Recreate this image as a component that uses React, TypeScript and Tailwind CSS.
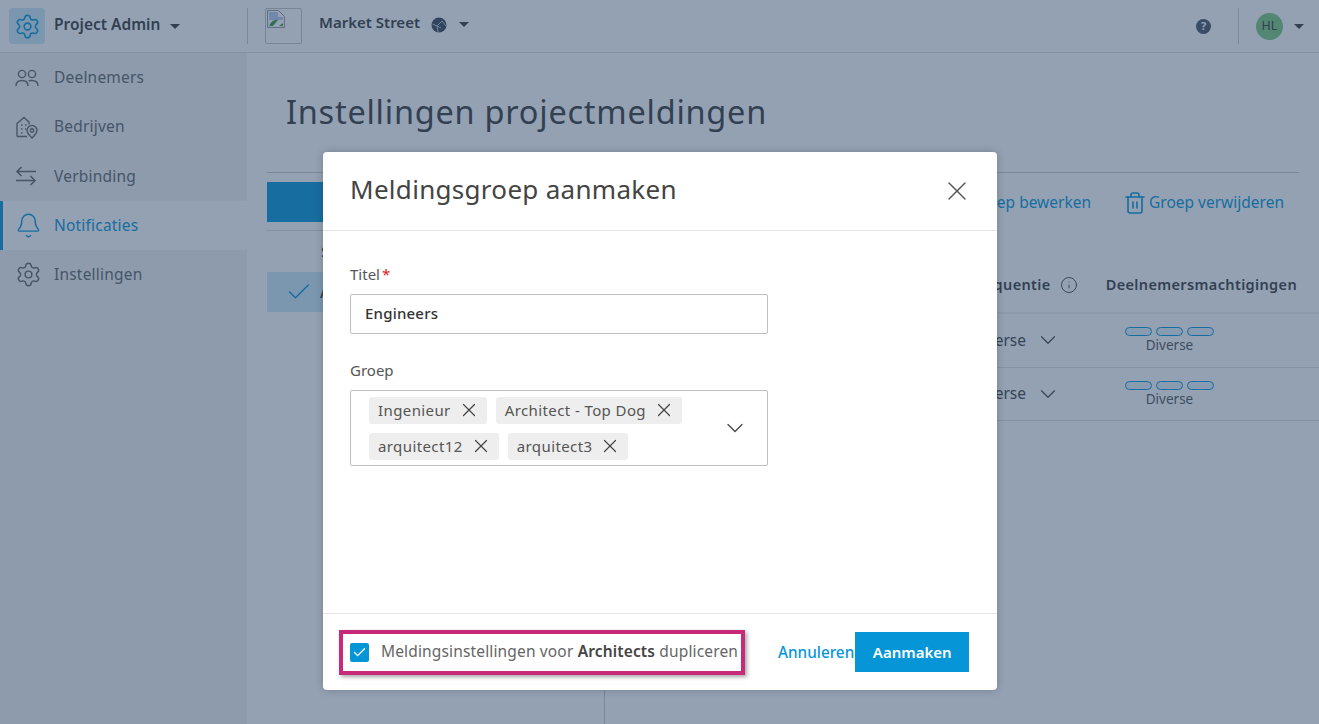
import React from 'react';
import { Settings, Bell, Trash2, Info, X, ChevronDown, Check } from 'lucide-react';

const font = "font-['Noto_Sans','Liberation_Sans',sans-serif]";

function Caret() {
  return <span className="inline-block w-0 h-0 border-x-[5px] border-x-transparent border-t-[5px] border-t-[#3c3c3c]" />;
}

function PeopleIcon() {
  return (
    <svg width="24" height="18" viewBox="0 0 24 18" fill="none" stroke="currentColor" strokeWidth="1.4">
      <circle cx="7" cy="5" r="3.600" />
      <circle cx="17" cy="5" r="3.600" />
      <path d="M1 17c0-3.500 2.500-5.500 6-5.500s6 2 6 5.500" />
      <path d="M13.500 11.800c1-.3 2.300-.4 3.500-.3 3.500 0 6 2 6 5.500" />
    </svg>
  );
}

function CompanyIcon() {
  return (
    <svg width="24" height="26" viewBox="0 0 24 26" fill="none" stroke="currentColor" strokeWidth="1.4">
      <path d="M2 22.500V9.500l7-6 5 4.500v2.500M2 22.500h10" />
      <path d="M6 11h1.500M10 11h1.500M6 15h1.500M6 19h1.500M10 15h1" />
      <path d="M17 24c-3-3-5-5-5-7.500a5 5 0 0 1 10 0c0 2.500-2 4.500-5 7.500z" />
      <circle cx="17" cy="16.500" r="1.700" />
    </svg>
  );
}

function SwapIcon() {
  return (
    <svg width="22" height="20" viewBox="0 0 22 20" fill="none" stroke="currentColor" strokeWidth="1.5">
      <path d="M21 5.500H2M6.500 1 2 5.500 6.500 10" />
      <path d="M1 14.500h19M15.500 10l4.500 4.500-4.500 4.500" />
    </svg>
  );
}

function BrokenImage() {
  return (
    <svg width="18" height="19" viewBox="0 0 18 19">
      <path d="M.5.500h11l6 6v11H.5z" fill="#fff" stroke="#9a9a9a" />
      <path d="M2 2h9v5h5v3H2z" fill="#b9cdf0" />
      <path d="M2 16c2-5 6-7 9-6l-5 6z" fill="#3f9a3f" />
      <path d="M12 16l4-3v3z" fill="#3f9a3f" />
    </svg>
  );
}

function Globe() {
  return (
    <svg width="16" height="16" viewBox="0 0 16 16">
      <circle cx="8" cy="8" r="7.500" fill="#3c4654" />
      <path d="M1.500 7 6 9l5-5M6 9l1 6M11 4l4 5M6 9l4 2" stroke="#b9c3cf" strokeWidth="1" fill="none" />
    </svg>
  );
}

function NavItem({ icon, label, active }: { icon: React.ReactNode; label: string; active?: boolean }) {
  return (
    <div
      className={`h-[49.3px] flex items-center border-l-[3px] pl-[12px] ${
        active ? 'border-[#0696d7] bg-white text-[#0696d7]' : 'border-transparent text-[#666]'
      }`}
    >
      <span className="w-[39px] flex items-center">{icon}</span>
      <span className="text-[15.5px] tracking-[0.2px]">{label}</span>
    </div>
  );
}

function Permission() {
  return (
    <div className="w-[91px] flex flex-col items-center text-[#555]">
      <div className="flex gap-[4px]">
        <span className="w-[27px] h-[9px] rounded-full border-[1.5px] border-[#0696d7] bg-[#e6f5fb]" />
        <span className="w-[27px] h-[9px] rounded-full border-[1.5px] border-[#0696d7] bg-[#e6f5fb]" />
        <span className="w-[27px] h-[9px] rounded-full border-[1.5px] border-[#0696d7] bg-[#e6f5fb]" />
      </div>
      <span className="text-[13.5px] leading-[16px] mt-[1px]">Diverse</span>
    </div>
  );
}

function TableRow() {
  return (
    <div className="h-[53.5px] flex items-center border-b border-[#e2e2e2] pl-[361px]">
      <span className="text-[15.5px] text-[#444] w-[60px] text-right">Diverse</span>
      <ChevronDown size={26} strokeWidth={1.1} className="ml-[9px] text-[#444]" />
      <span className="ml-[63px]"><Permission /></span>
    </div>
  );
}

function Chip({ label }: { label: string }) {
  return (
    <span className="h-[27px] flex items-center gap-[7px] pl-[9px] pr-[7px] rounded-[3px] bg-[#eeeeee] text-[15px] tracking-[0.4px] text-[#555]">
      {label}
      <X size={22} strokeWidth={1.3} className="text-[#444]" />
    </span>
  );
}

export default function App() {
  return (
    <div className={`${font} relative w-[1319px] h-[724px] overflow-hidden bg-white text-[#3c3c3c]`}>
      {/* Header */}
      <header className="h-[53px] flex items-center border-b border-[#dcdcdc] bg-white">
        <div className="w-[247px] flex items-center pl-[9px]">
          <span className="w-[36px] h-[36px] rounded-[4px] bg-[#cdeaf7] flex items-center justify-center text-[#0696d7]">
            <Settings size={27} strokeWidth={1.4} />
          </span>
          <span className="ml-[9px] -mt-[2px] text-[15.5px] font-semibold">Project Admin</span>
          <span className="ml-[10px] flex"><Caret /></span>
        </div>
        <div className="h-[36px] border-l border-[#cfcfcf]" />
        <div className="ml-[17px] w-[37px] h-[36px] border border-[#c4c4c4] rounded-[2px]">
          <span className="block ml-[1px] mt-[1px]"><BrokenImage /></span>
        </div>
        <span className="ml-[17px] text-[15px] font-semibold -mt-[8px]">Market Street</span>
        <span className="ml-[11px] -mt-[3px] flex"><Globe /></span>
        <span className="ml-[12px] -mt-[4px] flex"><Caret /></span>
        <div className="ml-auto flex items-center pr-[15px]">
          <span className="w-[15px] h-[15px] rounded-full bg-[#4a5565] text-white text-[11px] font-bold flex items-center justify-center">?</span>
          <div className="ml-[27px] h-[36px] border-l border-[#cfcfcf]" />
          <span className="ml-[17px] w-[27px] h-[27px] rounded-full bg-[#7fc97f] text-[12.5px] flex items-center justify-center">HL</span>
          <span className="ml-[11px] flex"><Caret /></span>
        </div>
      </header>

      <div className="flex h-[671px]">
        {/* Sidebar */}
        <aside className="w-[247px] bg-[#f3f3f3]">
          <NavItem icon={<PeopleIcon />} label="Deelnemers" />
          <NavItem icon={<CompanyIcon />} label="Bedrijven" />
          <NavItem icon={<SwapIcon />} label="Verbinding" />
          <NavItem active icon={<Bell size={27} strokeWidth={1.3} />} label="Notificaties" />
          <NavItem icon={<Settings size={27} strokeWidth={1.3} />} label="Instellingen" />
        </aside>

        {/* Main */}
        <main className="flex-1 flex flex-col">
          <h1 className="pl-[39px] pt-[37px] h-[119px] text-[32.5px] tracking-[0.75px] leading-[44px] font-normal">
            Instellingen projectmeldingen
          </h1>
          <div className="ml-[20px] mr-[20px] border-t border-[#cccccc]" />
          <div className="flex-1 flex pl-[20px]">
            <div className="w-[338px] border-r border-[#cccccc] pt-[9px]">
              <div className="h-[40px] w-[200px] bg-[#0696d7]" />
              <div className="mt-[8px] border-t border-[#dddddd] w-[318px]" />
              <div className="h-[41px] pl-[54px] flex items-center text-[14px]">Standaard</div>
              <div className="h-[40px] w-[200px] bg-[#cdeaf7] flex items-center pl-[18px] text-[14px]">
                <Check size={28} strokeWidth={1.2} className="text-[#0696d7]" />
                <span className="ml-[7px] font-semibold">Architects</span>
              </div>
            </div>
            <div className="flex-1 flex flex-col">
              <div className="h-[59px] flex items-center justify-end pr-[35px] text-[15.5px] text-[#0696d7]">
                <span>Groep bewerken</span>
                <Trash2 size={24} strokeWidth={1.6} className="ml-[32px] mr-[2px]" />
                <span>Groep verwijderen</span>
              </div>
              <div className="h-[82px] pt-[25px] flex items-center justify-end pr-[22px] text-[14.5px] tracking-[0.36px] font-semibold border-b-2 border-[#eeeeee]">
                <span>Frequentie</span>
                <Info size={18} strokeWidth={1.2} className="ml-[9px]" />
                <span className="ml-[28px]">Deelnemersmachtigingen</span>
              </div>
              <TableRow />
              <TableRow />
            </div>
          </div>
        </main>
      </div>

      {/* Modal backdrop */}
      <div className="absolute inset-0 bg-[rgba(39,67,103,0.5)] flex items-start justify-start">
        <div className="ml-[323px] mt-[152px] w-[674px] h-[538px] flex flex-col rounded-[4px] bg-white shadow-[0_0_8px_rgba(0,0,0,0.2)]">
          <div className="h-[79px] shrink-0 flex items-center justify-between border-b border-[#e4e4e4] pl-[27px] pr-[24px]">
            <h2 className="pb-[3px] text-[26px] tracking-[0.3px] font-normal text-[#444]">Meldingsgroep aanmaken</h2>
            <X size={32} strokeWidth={1} className="text-[#555]" />
          </div>

          <div className="flex-1 pl-[27px] pt-[31px]">
            <label className="block h-[29px] text-[15px] leading-[24px] text-[#555]">
              Titel<span className="ml-[2px] text-[#e02020]">*</span>
            </label>
            <div className="mt-[3px] w-[418px] h-[40px] pb-[2px] flex items-center border border-[#bfbfbf] rounded-[2px] pl-[14px] text-[15px] tracking-[0.2px] font-medium text-[#333]">
              Engineers
            </div>
            <label className="block mt-[24px] h-[32px] text-[15px] leading-[24px] text-[#555]">Groep</label>
            <div className="w-[418px] h-[76px] flex items-center border border-[#bfbfbf] rounded-[2px] pl-[18px] pr-[18px]">
              <div className="flex-1 flex flex-wrap gap-x-[9px] gap-y-[9px]">
                <Chip label="Ingenieur" />
                <Chip label="Architect - Top Dog" />
                <Chip label="arquitect12" />
                <Chip label="arquitect3" />
              </div>
              <ChevronDown size={28} strokeWidth={1.1} className="text-[#444]" />
            </div>
          </div>

          <div className="h-[77px] shrink-0 flex items-center border-t border-[#e4e4e4] pl-[16px]">
            <div className="w-[406px] h-[45px] flex items-center border-[4px] border-[#c72a78] pl-[7px] shadow-[2px_2px_4px_rgba(0,0,0,0.35)]">
              <span className="w-[19px] h-[19px] rounded-[2px] bg-[#0696d7] flex items-center justify-center text-white">
                <Check size={15} strokeWidth={2.2} />
              </span>
              <span className="ml-[12px] whitespace-nowrap text-[15.5px] tracking-[0.15px] text-[#666]">
                Meldingsinstellingen voor <b className="font-semibold text-[#444]">Architects</b> dupliceren
              </span>
            </div>
            <span className="ml-[33px] pr-[1px] text-[15.3px] font-medium text-[#0696d7]">Annuleren</span>
            <button className="w-[114px] h-[40px] bg-[#0696d7] text-white text-[15px] font-semibold">Aanmaken</button>
          </div>
        </div>
      </div>
    </div>
  );
}
